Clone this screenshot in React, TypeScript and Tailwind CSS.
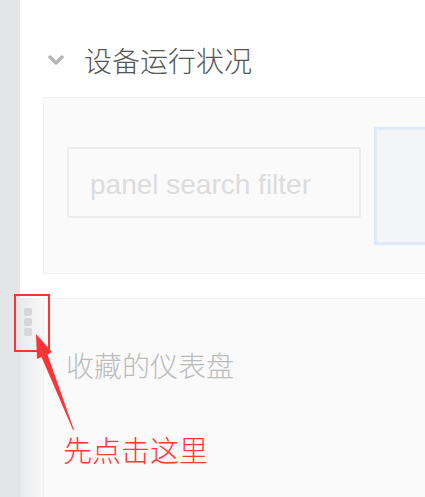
import React from "react";

const cjk = { fontFamily: '"Noto Sans CJK SC", "Noto Sans", sans-serif' };

const App = () => {
  return (
    <div className="relative flex w-[425px] h-[497px] overflow-hidden bg-white">
      {/* Sidebar */}
      <div className="w-[20px] shrink-0 bg-[#e4e5e7]" />

      {/* Main */}
      <div className="flex-1 flex flex-col">
        {/* Section header */}
        <div className="flex items-center h-[97px] pl-[28px] pt-[22px]">
          <svg width="16" height="10" viewBox="0 0 16 10" className="shrink-0">
            <path d="M2 2 L8 8 L14 2" fill="none" stroke="#b5b5b5" strokeWidth="3.4" strokeLinecap="round" strokeLinejoin="round" />
          </svg>
          <span className="ml-[20px] text-[28px] font-light leading-none text-[#555]" style={cjk}>
            设备运行状况
          </span>
        </div>

        {/* Search panel */}
        <div className="ml-[23px] h-[177px] border border-r-0 border-[#eff0f4] bg-[#fafafa] flex items-start pl-[23px] pt-[29px] gap-[13px]">
          <div className="mt-[20px] w-[294px] h-[71px] shrink-0 border-2 border-[#ececec] rounded-[2px] flex items-center pl-[21px] pt-[4px]">
            <span className="text-[28px] text-[#dcdcdc]" style={{ fontFamily: '"Liberation Sans", Arial, sans-serif' }}>
              panel search filter
            </span>
          </div>
          <div className="flex-1 h-[118px] border-2 border-r-0 border-[#dbeafb] rounded-l-[2px]">
            <div className="h-full border border-r-0 border-[#e9eaee] bg-[#f4f5f9]" />
          </div>
        </div>

        {/* Favourite dashboards */}
        <div className="mt-[24px] flex flex-1">
          <div className="w-[23px] shrink-0 bg-gradient-to-r from-[#e9eaec] to-[#f8f8f8] flex flex-col items-center pt-[10px] gap-[2px]">
            <div className="ml-[-8px] w-[8px] h-[8px] rounded-[2px] bg-[#d6d6d6]" />
            <div className="ml-[-8px] w-[8px] h-[8px] rounded-[2px] bg-[#d6d6d6]" />
            <div className="ml-[-8px] w-[8px] h-[8px] rounded-[2px] bg-[#d6d6d6]" />
          </div>
          <div className="flex-1 border-t border-l border-[#eff0f4] bg-[#fafafa] pl-[22px] pt-[52px]">
            <div className="text-[28px] font-light leading-none text-[#bcbcbc]" style={cjk}>
              收藏的仪表盘
            </div>
            <div className="mt-[56px] ml-[-3px] text-[29px] font-light leading-none text-[#ff3838]" style={cjk}>
              先点击这里
            </div>
          </div>
        </div>
      </div>

      {/* Annotation: red box */}
      <div className="absolute left-[14px] top-[294px] w-[36px] h-[58px] border-[2.5px] border-[#ff3333]" />

      {/* Annotation: arrow */}
      <svg className="absolute left-0 top-0 pointer-events-none" width="425" height="497" viewBox="0 0 425 497">
        <polygon
          points="36,334 52,352 47.5,354.5 74,430 73,430 41.5,357 37,359"
          fill="#ff3333"
        />
      </svg>
    </div>
  );
};

export default App;
